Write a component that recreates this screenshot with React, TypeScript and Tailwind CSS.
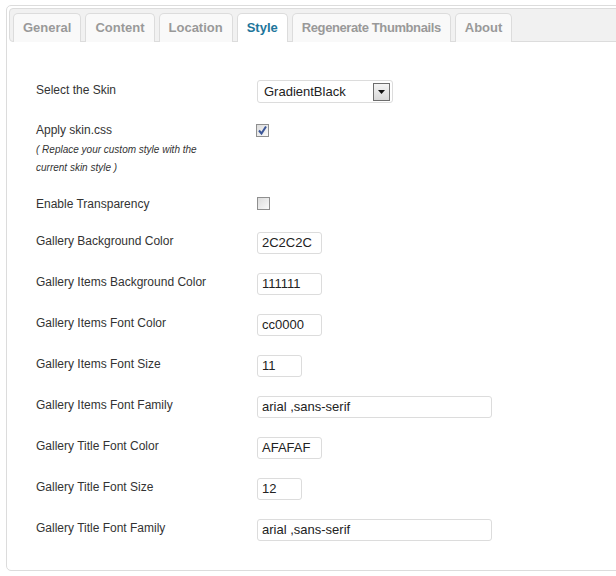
import React from "react";

const tabs = ["General", "Content", "Location", "Style", "Regenerate Thumbnails", "About"];

type Row = { label: string; value: string; width: string };

const rows: Row[] = [
  { label: "Gallery Background Color", value: "2C2C2C", width: "w-[65px]" },
  { label: "Gallery Items Background Color", value: "111111", width: "w-[65px]" },
  { label: "Gallery Items Font Color", value: "cc0000", width: "w-[65px]" },
  { label: "Gallery Items Font Size", value: "11", width: "w-[45px]" },
  { label: "Gallery Items Font Family", value: "arial ,sans-serif", width: "w-[235px]" },
  { label: "Gallery Title Font Color", value: "AFAFAF", width: "w-[65px]" },
  { label: "Gallery Title Font Size", value: "12", width: "w-[45px]" },
  { label: "Gallery Title Font Family", value: "arial ,sans-serif", width: "w-[235px]" },
];

const Checkbox = ({ checked }: { checked?: boolean }) => (
  <span className="flex w-[13px] h-[13px] border border-[#8f8f8f] bg-gradient-to-br from-[#dcdcdc] to-[#fafafa] items-center justify-center">
    {checked && (
      <svg width="11" height="11" viewBox="0 0 11 11">
        <path d="M2 5.5 L4.5 8.5 L9 1.5" fill="none" stroke="#3b5698" strokeWidth="2" />
      </svg>
    )}
  </span>
);

const App = () => {
  return (
    <div className="w-[616px] h-[576px] overflow-hidden bg-white font-['Liberation_Sans',Arial,sans-serif] text-[#333]">
      <div className="ml-[6px] mt-[5px] w-[640px] h-[566px] border border-[#dcdcdc] rounded-[5px] pt-[2px] pl-[2px]">
        <div className="h-[34px] bg-[#f1f1f1] border border-[#dcdcdc] rounded-[4px] flex items-end pl-[3px] gap-[4px]">
          {tabs.map((tab) => {
            const active = tab === "Style";
            const squeeze = tab === "Regenerate Thumbnails" ? "tracking-[-0.4px]" : "";
            return (
              <div
                key={tab}
                className={`h-[29px] mb-[-1px] px-[9px] flex items-center rounded-t-[5px] border border-b-0 border-[#dcdcdc] text-[13px] font-bold ${squeeze} ${
                  active ? "bg-white text-[#21759b]" : "bg-[#f9f9f9] text-[#999]"
                }`}
              >
                {tab}
              </div>
            );
          })}
        </div>

        <div className="pl-[27px] text-[12px]">
          <div className="mt-[38px] flex items-start">
            <div className="w-[221px] pt-[3px] leading-[14px]">Select the Skin</div>
            <div className="w-[136px] h-[23px] border border-[#dcdcdc] rounded-[3px] flex items-center pl-[6px] pr-[2px] justify-between">
              <span className="text-[13px] text-[#222]">GradientBlack</span>
              <span className="w-[17px] h-[18px] border border-[#6d6d6d] bg-gradient-to-b from-[#f4f4f4] to-[#d8d8d8] flex items-center justify-center">
                <svg width="7" height="4" viewBox="0 0 7 4">
                  <path d="M0 0 H7 L3.5 4 Z" fill="#111" />
                </svg>
              </span>
            </div>
          </div>

          <div className="mt-[20px] flex items-start">
            <div className="w-[221px]">
              <div className="leading-[14px]">Apply skin.css</div>
              <div className="mt-[4px] text-[10px] italic leading-[18px]">
                ( Replace your custom style with the
                <br />
                current skin style )
              </div>
            </div>
            <div className="pt-[1px] -ml-[1px]">
              <Checkbox checked />
            </div>
          </div>

          <div className="mt-[20px] flex items-start">
            <div className="w-[221px] leading-[14px]">Enable Transparency</div>
            <Checkbox />
          </div>

          <div className="mt-[21px] flex flex-col gap-[19px]">
            {rows.map((row) => (
              <div key={row.label} className="flex items-start">
                <div className="w-[221px] pt-[2px] leading-[14px]">{row.label}</div>
                <div
                  className={`${row.width} h-[22px] border border-[#dcdcdc] rounded-[3px] flex items-center pl-[4px] text-[13px] text-[#222]`}
                >
                  {row.value}
                </div>
              </div>
            ))}
          </div>
        </div>
      </div>
    </div>
  );
};

export default App;
